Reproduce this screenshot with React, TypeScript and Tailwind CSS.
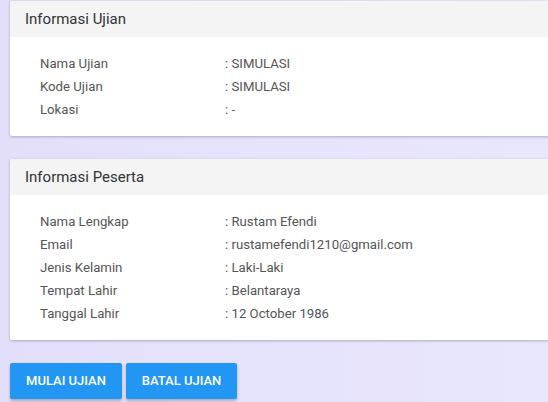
import React from "react";

const ujian: [string, string][] = [
  ["Nama Ujian", "SIMULASI"],
  ["Kode Ujian", "SIMULASI"],
  ["Lokasi", "-"],
];

const peserta: [string, string][] = [
  ["Nama Lengkap", "Rustam Efendi"],
  ["Email", "rustamefendi1210@gmail.com"],
  ["Jenis Kelamin", "Laki-Laki"],
  ["Tempat Lahir", "Belantaraya"],
  ["Tanggal Lahir", "12 October 1986"],
];

function InfoCard({ title, rows }: { title: string; rows: [string, string][] }) {
  return (
    <div className="bg-white rounded-[2px] shadow-[0_1px_3px_rgba(0,0,0,0.25)] overflow-hidden">
      <div className="h-[36px] flex items-center px-[15px] bg-[#f4f4f4] text-[15px] text-[#333]">
        {title}
      </div>
      <div className="pt-[15px] pb-[15px] pl-[30px]">
        {rows.map(([label, value]) => (
          <div key={label} className="flex h-[23px] items-center text-[13.2px] text-[#555]">
            <div className="w-[185px]">{label}</div>
            <div>: {value}</div>
          </div>
        ))}
      </div>
    </div>
  );
}

export default function App() {
  return (
    <div
      className="w-[548px] h-[402px] overflow-hidden bg-gradient-to-r from-[#e3dffb] to-[#e9e7fd] pl-[10px] pt-px"
      style={{ fontFamily: "Roboto, 'Liberation Sans', sans-serif" }}
    >
      <div className="flex flex-col gap-[23px] -mr-[10px]">
        <InfoCard title="Informasi Ujian" rows={ujian} />
        <InfoCard title="Informasi Peserta" rows={peserta} />
      </div>
      <div className="flex gap-[4px] mt-[23px]">
        <button className="h-[36px] w-[112px] bg-[#2196f3] text-white text-[13px] font-medium rounded-[2px] shadow-[0_2px_3px_rgba(0,0,0,0.25)]">
          MULAI UJIAN
        </button>
        <button className="h-[36px] w-[111px] bg-[#2196f3] text-white text-[13px] font-medium rounded-[2px] shadow-[0_2px_3px_rgba(0,0,0,0.25)]">
          BATAL UJIAN
        </button>
      </div>
    </div>
  );
}
